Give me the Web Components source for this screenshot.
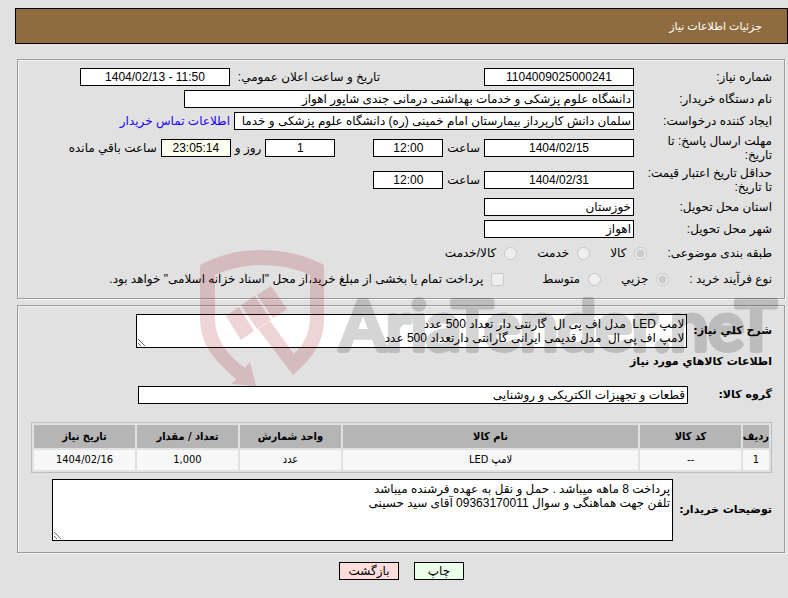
<!DOCTYPE html>
<html lang="fa" dir="rtl">
<head>
<meta charset="utf-8">
<title>جزئیات اطلاعات نیاز</title>
<style>
    body {
        margin: 0;
        background: #e1e1e1;
        color: #000;
        font: 12px/14px "Liberation Sans", "DejaVu Sans", sans-serif;
        --bold-font: bold 11px/14px "DejaVu Sans", sans-serif;
    }
</style>
</head>
<body>
<need-page>
    <page-title slot="title">جزئیات اطلاعات نیاز</page-title>

    <need-panel>
        <form-row>
            <text-field class="main" label="شماره نیاز:" value="1104009025000241" centered></text-field>
            <text-field class="second" label="تاریخ و ساعت اعلان عمومي:" value="1404/02/13 - 11:50" centered></text-field>
        </form-row>
        <form-row>
            <text-field class="main" size="450" label="نام دستگاه خریدار:" value="دانشگاه علوم پزشکی و خدمات بهداشتی درمانی جندی شاپور اهواز"></text-field>
        </form-row>
        <form-row>
            <text-field class="main" size="400" label="ایجاد کننده درخواست:" value="سلمان دانش کارپرداز بیمارستان امام خمینی (ره) دانشگاه علوم پزشکی و خدما"></text-field>
            <contact-link href="#contact">اطلاعات تماس خریدار</contact-link>
        </form-row>
        <form-row>
            <text-field class="main" label="مهلت ارسال پاسخ: تا تاریخ:" value="1404/02/15" centered></text-field>
            <text-field size="70" label="ساعت" value="12:00" centered></text-field>
            <text-field class="apart" size="70" name="روز" value="1" centered></text-field>
            <text-field size="70" label="روز و" value="23:05:14" centered highlight></text-field>
            <span>ساعت باقي مانده</span>
        </form-row>
        <form-row>
            <text-field class="main" label="حداقل تاریخ اعتبار قیمت: تا تاریخ:" value="1404/02/31" centered></text-field>
            <text-field size="70" label="ساعت" value="12:00" centered></text-field>
        </form-row>
        <form-row>
            <text-field class="main" label="استان محل تحویل:" value="خوزستان"></text-field>
        </form-row>
        <form-row>
            <text-field class="main" label="شهر محل تحویل:" value="اهواز"></text-field>
        </form-row>
        <form-row class="choices">
            <choice-group label="طبقه بندی موضوعی:" options="کالا,خدمت,کالا/خدمت"></choice-group>
        </form-row>
        <form-row class="choices">
            <choice-group label="نوع فرآیند خرید :" options="جزیي,متوسط"></choice-group>
            <check-option class="apart">پرداخت تمام یا بخشی از مبلغ خرید،از محل "اسناد خزانه اسلامی" خواهد بود.</check-option>
        </form-row>
    </need-panel>

    <need-panel class="goods">
        <form-row>
            <text-note size="551" rows="2" label="شرح کلي نیاز:">لامپ LED  مدل اف پی ال  گارنتی دار تعداد 500 عدد
لامپ اف پی ال  مدل قدیمی ایرانی گارانتی دارتعداد 500 عدد</text-note>
        </form-row>
        <section-title>اطلاعات کالاهاي مورد نیاز</section-title>
        <form-row>
            <text-field class="group" size="550" label="گروه کالا:" value="قطعات و تجهیزات الکتریکی و روشنایی"></text-field>
        </form-row>
        <goods-table></goods-table>
        <form-row>
            <text-note size="621" rows="4" label="توضیحات خریدار:">پرداخت 8 ماهه میباشد . حمل و نقل به عهده فرشنده میباشد
تلفن جهت هماهنگی و سوال 09363170011 آقای سید حسینی</text-note>
        </form-row>
    </need-panel>

    <action-button slot="actions" kind="print">چاپ</action-button>
    <action-button slot="actions" kind="back">بازگشت</action-button>
    <water-mark slot="mark"></water-mark>
</need-page>

<script>
class NeedPage extends HTMLElement {
    constructor() {
        super();
        this.attachShadow({mode: 'open'});
        this.shadowRoot.innerHTML = `
            <style>
                :host {
                    display: block;
                    position: relative;
                    padding: 8px 0 0 15px;
                    overflow: hidden;
                }
                main {
                    display: flex;
                    flex-direction: column;
                    gap: 6px;
                    margin: 15px 3px 9px 2px;
                }
                footer {
                    display: flex;
                    justify-content: center;
                    gap: 15px;
                    padding-bottom: 18px;
                }
            </style>
            <slot name="title"></slot>
            <main><slot></slot></main>
            <footer><slot name="actions"></slot></footer>
            <slot name="mark"></slot>
        `;
    }
}

class PageTitle extends HTMLElement {
    constructor() {
        super();
        this.attachShadow({mode: 'open'});
        this.shadowRoot.innerHTML = `
            <style>
                :host {
                    display: block;
                    padding: 10px 25px;
                    border: 1px solid #000;
                    background: #8f6c40;
                    color: #fff;
                }
                h1 {
                    margin: 0;
                    font: inherit;
                    font-size: 11px;
                }
            </style>
            <h1><slot></slot></h1>
        `;
    }
}

class NeedPanel extends HTMLElement {
    constructor() {
        super();
        this.attachShadow({mode: 'open'});
        this.shadowRoot.innerHTML = `
            <style>
                :host {
                    display: block;
                }
                section {
                    display: flex;
                    flex-direction: column;
                    gap: 4px;
                    padding: 8px 12px 8px 13px;
                    border: 1px solid #9a9a9a;
                    box-shadow: inset 1px 1px #f2f2f2, 1px 1px #f2f2f2;
                }
                :host(.goods) section {
                    padding-bottom: 11px;
                }
            </style>
            <section><slot></slot></section>
        `;
    }
}

class FormRow extends HTMLElement {
    constructor() {
        super();
        this.attachShadow({mode: 'open'});
        this.shadowRoot.innerHTML = `
            <style>
                :host {
                    display: flex;
                    align-items: center;
                    gap: 4px;
                    min-height: 18px;
                }
                :host(.choices) {
                    min-height: 22px;
                }
                ::slotted(.second) {
                    margin-inline-start: 100px;
                }
                ::slotted(.apart) {
                    margin-inline-start: 34px;
                }
            </style>
            <slot></slot>
        `;
    }
}

class TextField extends HTMLElement {
    constructor() {
        super();
        this.attachShadow({mode: 'open'});
        this.shadowRoot.innerHTML = `
            <style>
                :host {
                    display: flex;
                    align-items: center;
                    gap: 4px;
                }
                :host(.main) label {
                    box-sizing: border-box;
                    width: 134px;
                    padding-inline-end: 4px;
                }
                :host(.second) label {
                    width: 146px;
                }
                :host(.group) {
                    margin: 13px 0 12px;
                }
                :host(.group) label {
                    width: 80px;
                    font: var(--bold-font);
                }
                input {
                    box-sizing: border-box;
                    height: 18px;
                    padding: 1px 2px;
                    border: 1px solid #000;
                    border-radius: 0;
                    background: #fff;
                    color: #000;
                    font: inherit;
                }
                /* numbers and dates */
                :host([centered]) input {
                    direction: ltr;
                    text-align: center;
                }
                :host([highlight]) input {
                    background: #fffff0;
                }
            </style>
            <label for="field"></label>
            <input id="field" type="text" readonly>
        `;
    }

    connectedCallback() {
        const label = this.shadowRoot.querySelector('label');
        const input = this.shadowRoot.querySelector('input');
        if (this.hasAttribute('label')) {
            label.textContent = this.getAttribute('label');
        } else {
            label.remove();
            input.setAttribute('aria-label', this.getAttribute('name'));
        }
        input.value = this.getAttribute('value');
        input.style.width = (this.getAttribute('size') || 150) + 'px';
    }
}

class TextNote extends HTMLElement {
    constructor() {
        super();
        this.attachShadow({mode: 'open'});
        this.shadowRoot.innerHTML = `
            <style>
                :host {
                    display: flex;
                    align-items: center;
                    gap: 6px;
                }
                label {
                    font: var(--bold-font);
                    white-space: nowrap;
                }
                textarea {
                    box-sizing: content-box;
                    padding: 2px;
                    border: 1px solid #000;
                    background: #fff;
                    color: #000;
                    font: inherit;
                    overflow: hidden;
                }
            </style>
            <label for="note"></label>
            <textarea id="note" readonly></textarea>
        `;
    }

    connectedCallback() {
        const note = this.shadowRoot.querySelector('textarea');
        this.shadowRoot.querySelector('label').textContent = this.getAttribute('label');
        note.value = this.textContent;
        note.rows = this.getAttribute('rows');
        note.style.width = (this.getAttribute('size') - 6) + 'px';
    }
}

class ChoiceGroup extends HTMLElement {
    constructor() {
        super();
        this.attachShadow({mode: 'open'});
    }

    // the first option is always the chosen one
    connectedCallback() {
        const options = this.getAttribute('options').split(',');
        this.shadowRoot.innerHTML = `
            <style>
                div {
                    display: flex;
                    align-items: center;
                    gap: 20px;
                }
                label {
                    display: flex;
                    align-items: center;
                    gap: 8px;
                }
                input {
                    width: 13px;
                    height: 13px;
                    margin: 0;
                }
            </style>
            <div role="radiogroup" aria-labelledby="name">
                <span id="name">${this.getAttribute('label')}</span>
                ${options.map((option, i) => `
                    <label><input type="radio" name="choice" disabled ${i === 0 ? 'checked' : ''}>${option}</label>
                `).join('')}
            </div>
        `;
    }
}

class CheckOption extends HTMLElement {
    constructor() {
        super();
        this.attachShadow({mode: 'open'});
        this.shadowRoot.innerHTML = `
            <style>
                :host {
                    display: block;
                }
                label {
                    display: flex;
                    align-items: center;
                    gap: 8px;
                }
                input {
                    width: 13px;
                    height: 13px;
                    margin: 0;
                }
            </style>
            <label><input type="checkbox" disabled><span><slot></slot></span></label>
        `;
    }
}

class ContactLink extends HTMLElement {
    constructor() {
        super();
        this.attachShadow({mode: 'open'});
        this.shadowRoot.innerHTML = `
            <style>
                a {
                    color: #1a00ff;
                    text-decoration: none;
                }
            </style>
            <a><slot></slot></a>
        `;
    }

    connectedCallback() {
        this.shadowRoot.querySelector('a').href = this.getAttribute('href');
    }
}

class SectionTitle extends HTMLElement {
    constructor() {
        super();
        this.attachShadow({mode: 'open'});
        this.shadowRoot.innerHTML = `
            <style>
                h2 {
                    margin: 3px 0 0;
                    font: var(--bold-font);
                }
            </style>
            <h2><slot></slot></h2>
        `;
    }
}

class GoodsTable extends HTMLElement {
    constructor() {
        super();
        this.attachShadow({mode: 'open'});
        this.shadowRoot.innerHTML = `
            <style>
                :host {
                    display: block;
                    margin: 2px 0;
                }
                table {
                    width: 100%;
                    table-layout: fixed;
                    border: 1px solid #bdbdbd;
                    border-spacing: 2px;
                    font: 11px/14px "DejaVu Sans Condensed", "DejaVu Sans", sans-serif;
                }
                th, td {
                    padding: 0;
                    text-align: center;
                    white-space: nowrap;
                }
                th {
                    width: 101px;
                    height: 23px;
                    background: #b5b5b5;
                }
                th:first-child {
                    width: 26px;
                }
                th.name {
                    width: auto;
                }
                td {
                    height: 20px;
                    background: #f7f7f7;
                }
            </style>
            <table>
                <thead>
                    <tr><th>ردیف</th><th>کد کالا</th><th class="name">نام کالا</th><th>واحد شمارش</th><th>تعداد / مقدار</th><th>تاریخ نیاز</th></tr>
                </thead>
                <tbody>
                    <tr><td>1</td><td>--</td><td>لامپ LED</td><td>عدد</td><td>1,000</td><td>1404/02/16</td></tr>
                </tbody>
            </table>
        `;
    }
}

class ActionButton extends HTMLElement {
    constructor() {
        super();
        this.attachShadow({mode: 'open'});
        this.shadowRoot.innerHTML = `
            <style>
                button {
                    width: 50px;
                    height: 18px;
                    padding: 0;
                    border: 1px solid #000;
                    background: #ebffeb;
                    color: #000;
                    font: inherit;
                    display: block;
                }
                :host([kind=back]) button {
                    width: 60px;
                    background: #ffdddd;
                }
            </style>
            <button type="button"><slot></slot></button>
        `;
    }
}

class WaterMark extends HTMLElement {
    constructor() {
        super();
        this.attachShadow({mode: 'open'});
        this.shadowRoot.innerHTML = `
            <style>
                :host {
                    position: absolute;
                    top: 250px;
                    left: 200px;
                    width: 600px;
                    height: 140px;
                    pointer-events: none;
                }
                text {
                    font: 68px Lato, sans-serif;
                    fill: #000;
                    stroke: #000;
                    stroke-width: 6px;
                    stroke-linejoin: round;
                    opacity: .16;
                }
            </style>
            <svg width="600" height="140" viewBox="0 0 600 140" direction="ltr" aria-hidden="true">
                <!-- shield with its arrow tail, and the hammer inside -->
                <g fill="#a00010" fill-opacity=".17">
                    <path d="M0 15Q28 0 62 0T124 15V68C124 94 112 108 93 125L58 79L70 71L94 104C104 94 110 84 110 66V25Q88 15 62 15T15 25V68C15 88 26 104 45 118L50 112L56 136L31 134L36 129C14 110 0 94 0 68Z"/>
                    <path d="M26 66L39 57L54 81L41 90Z"/>
                    <path d="M41 55L55 46L71 70L57 79Z"/>
                    <path d="M57 45L71 36L87 59L73 68Z"/>
                </g>
                <text x="140" y="100">AriaTender.neT</text>
            </svg>
        `;
    }
}

customElements.define('need-page', NeedPage);
customElements.define('page-title', PageTitle);
customElements.define('need-panel', NeedPanel);
customElements.define('form-row', FormRow);
customElements.define('text-field', TextField);
customElements.define('text-note', TextNote);
customElements.define('choice-group', ChoiceGroup);
customElements.define('check-option', CheckOption);
customElements.define('contact-link', ContactLink);
customElements.define('section-title', SectionTitle);
customElements.define('goods-table', GoodsTable);
customElements.define('action-button', ActionButton);
customElements.define('water-mark', WaterMark);
</script>
</body>
</html>
